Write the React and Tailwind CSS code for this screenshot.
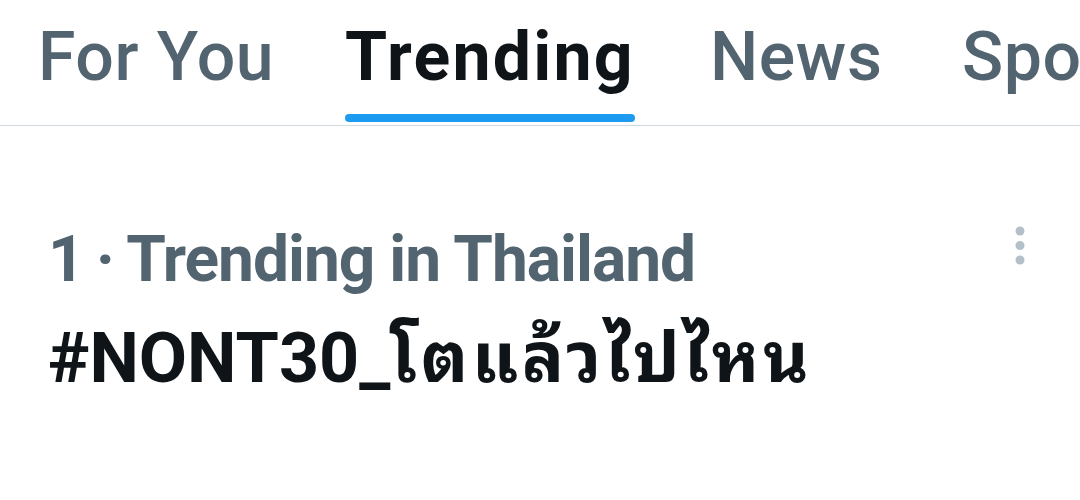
const TABS = [
    { key: 'for_you',  label: 'For You',  width: 'w-[232px]' },
    { key: 'trending', label: 'Trending', width: 'w-[290px]', active: true },
    { key: 'news',     label: 'News',     width: 'w-[177px]' },
    { key: 'sports',   label: 'Sports',   width: 'w-[220px]' },
];

function MoreDots() {
    return (
        <svg width="10" height="40" viewBox="0 0 10 40" fill="currentColor">
            <circle cx="5" cy="5" r="4.5" />
            <circle cx="5" cy="19.5" r="4.5" />
            <circle cx="5" cy="34" r="4.5" />
        </svg>
    );
}

export default function App() {
    return (
        <div className="w-[1080px] h-[500px] bg-white overflow-hidden font-['Roboto','Noto_Sans_Thai_Looped','Noto_Sans',sans-serif]">
            {/* Tabs */}
            <div className="flex h-[126px] border-b border-[#cfd9de] pl-[38px] gap-[75px] whitespace-nowrap">
                {TABS.map((tab) => (
                    <div key={tab.key} className={`relative shrink-0 flex flex-col ${tab.width}`}>
                        <span
                            className={[
                                'block text-[68px] leading-none pt-[23px]',
                                tab.active
                                    ? 'font-bold text-[#0f1419] tracking-[2.2px]'
                                    : 'font-medium text-[#536471] tracking-[0.6px]',
                            ].join(' ')}
                        >
                            {tab.label}
                        </span>
                        {tab.active && (
                            <div className="absolute left-0 right-0 bottom-[3px] h-[8px] rounded-full bg-[#1d9bf0]" />
                        )}
                    </div>
                ))}
            </div>

            {/* Trend row */}
            <div className="flex justify-between pl-[48px] pr-[55px] pt-[94px]">
                <div className="flex flex-col">
                    <span className="text-[64px] leading-[80px] font-bold text-[#536471] tracking-[-1px]">
                        1{'\u2009'}·{'\u2009'}Trending in Thailand
                    </span>
                    <span className="text-[70px] leading-[100px] mt-[8px] font-bold text-[#0f1419] whitespace-nowrap">
                        #NONT30_<span className="tracking-[3.5px]">โตแล้วไปไหน</span>
                    </span>
                </div>
                <div className="pt-[6px] text-[#b3c0c9]">
                    <MoreDots />
                </div>
            </div>
        </div>
    );
}
